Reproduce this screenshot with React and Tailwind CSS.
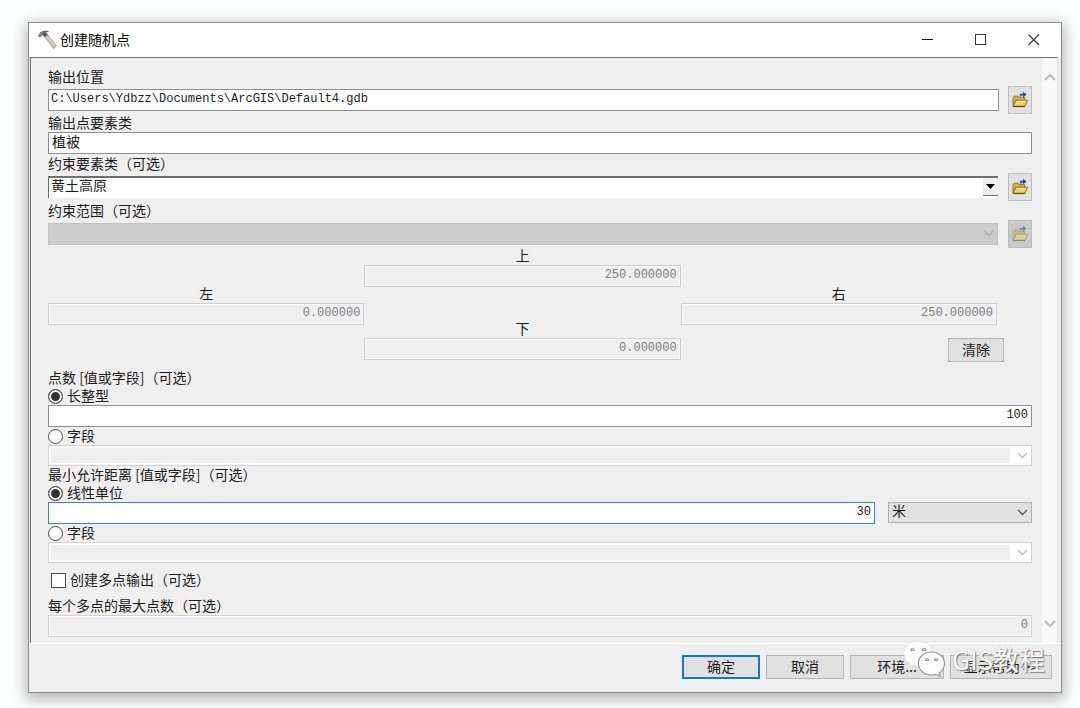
import { useState } from 'react';

const cjk = "font-['Noto_Sans_CJK_SC','Noto_Sans',sans-serif]";
const mono = "font-['Liberation_Mono','Noto_Sans_CJK_SC',monospace]";

function HammerIcon() {
    return (
        <svg width="20" height="20" viewBox="0 0 20 20" aria-hidden="true">
            <path d="M7.6 6.6 L10.4 4.2 L19 15.2 Q19.2 17.8 16.2 18.4 Z" fill="#c4b9a4" stroke="#a59a88" strokeWidth="0.6" />
            <path d="M9.8 6 L17.8 16" stroke="#e0d8c8" strokeWidth="1.2" />
            <path d="M0.8 6 L3.6 2 L7 0.8 L11.4 0.8 L11.6 2 L9 2.6 L10.8 4.6 L7.6 7.2 L5.8 5 L2.6 7.4 Z" fill="#65696b" />
            <path d="M1 6 L4 2.4 L6.6 2.2 L3 6.8 Z" fill="#8c9496" />
            <path d="M6 3.4 L9 5.4" stroke="#44484a" strokeWidth="1.2" />
        </svg>
    );
}

function FolderIcon() {
    return (
        <svg width="18" height="18" viewBox="0 0 18 18" aria-hidden="true">
            <path d="M2 15 V6.6 L3.2 5.2 H7 L8.2 6.6 H13.8 V9.5 H5 Z" fill="#d3b04c" stroke="#94792f" strokeWidth="1" />
            <path d="M2.2 15.4 L5 9.2 H16.4 L14 15.4 Z" fill="#efd36c" stroke="#8f742b" strokeWidth="1" />
            <path d="M5.6 10.4 H14.6" stroke="#f9e9a6" strokeWidth="1" />
            <path d="M2 15.5 H14" stroke="#57470f" strokeWidth="1.2" />
            <path d="M9.6 5.4 V3.6 H12.4" fill="none" stroke="#2a5f96" strokeWidth="1.6" />
            <path d="M12 0.8 L15.6 3.6 L12 6.4 Z" fill="#1a4f88" />
        </svg>
    );
}

function Chevron({ className }) {
    return (
        <svg width="11" height="7" viewBox="0 0 11 7" className={`pointer-events-none absolute ${className}`} aria-hidden="true">
            <path d="M1 1 L5.5 5.5 L10 1" fill="none" stroke="currentColor" strokeWidth="1.3" />
        </svg>
    );
}

function Label({ htmlFor, className = '', children }) {
    return (
        <label htmlFor={htmlFor} className={`block h-[17px] text-sm leading-[15px] whitespace-nowrap ${className}`}>
            {children}
        </label>
    );
}

function BrowseButton({ disabled }) {
    return (
        <button
            type="button"
            aria-label="浏览"
            disabled={disabled}
            className="flex h-7 w-6 shrink-0 items-center justify-center border border-[#bcbcbc] bg-[#e1e1e1] disabled:bg-[#cacaca]"
        >
            <span className={disabled ? 'opacity-50' : ''}>
                <FolderIcon />
            </span>
        </button>
    );
}

function TextInput({ className = '', ...props }) {
    return (
        <input
            type="text"
            className={`block h-[22px] min-w-0 border border-[#8f8f8f] bg-white outline-none ${className}`}
            {...props}
        />
    );
}

// Greyed out coordinate box of the extent block
function ExtentInput({ id, label, value }) {
    return (
        <div>
            <Label htmlFor={id} className="text-center">{label}</Label>
            <input
                id={id}
                type="text"
                disabled
                value={value}
                className={`block h-[22px] w-full border border-[#cfcfcf] bg-[#efefef] px-[3px] pb-0.5 text-right text-xs text-[#808080] shadow-[inset_0_0_0_1px_#fafafa] ${mono}`}
            />
        </div>
    );
}

function FieldSelect({ label }) {
    return (
        <div className="relative">
            <select
                aria-label={label}
                disabled
                className="block h-[21px] w-full appearance-none border border-[#d2d2d2] bg-[#efefef] opacity-100 shadow-[inset_-21px_0_0_0_#fff,inset_0_0_0_2px_#fff]"
            />
            <Chevron className="top-[7px] right-1 text-[#bdbdbd]" />
        </div>
    );
}

function Radio({ name, value, current, onChange, children }) {
    return (
        <label className="flex h-[18px] items-center gap-1 text-sm leading-4">
            <input
                type="radio"
                name={name}
                checked={current === value}
                onChange={() => onChange(value)}
                className="size-[15px] appearance-none rounded-full border border-[#4a4a4a] bg-white checked:bg-[#333] checked:shadow-[inset_0_0_0_2px_#fff]"
            />
            <span className="pb-0.5">{children}</span>
        </label>
    );
}

function DialogButton({ className = '', children }) {
    return (
        <button type="button" className={`h-6 bg-[#e1e1e1] pb-0.5 text-sm leading-4 whitespace-nowrap ${className}`}>
            {children}
        </button>
    );
}

function Watermark() {
    return (
        <div className="pointer-events-none absolute -top-1 right-4 flex items-center gap-1.5">
            <svg width="43" height="38" viewBox="0 0 43 38" aria-hidden="true">
                <path d="M15 1 C6 1 1 7 1 13.5 C1 17.5 3 21 6.5 23.5 L5 28 L10.5 25.3 C12 25.8 13.5 26 15 26 C23 26 29.5 20.5 29.5 13.5 C29.5 6.5 23 1 15 1 Z" fill="#fcfcfc" stroke="#dcdcdc" strokeWidth="0.8" />
                <path d="M28.5 12 C21 12 15.5 17 15.5 23.5 C15.5 30 21 35 28.5 35 C30 35 31.5 34.7 33 34.3 L37.5 36.5 L36.3 33 C39.5 30.800 41.5 27.5 41.5 23.5 C41.5 17 35.5 12 28.5 12 Z" fill="#fcfcfc" stroke="#9c9c9c" strokeWidth="1.2" />
                <g fill="#fcfcfc" stroke="#8a8a8a" strokeWidth="1">
                    <path d="M7.6 10.4 A1.9 1.9 0 0 1 11.4 10.4 Z" />
                    <path d="M19.2 10.4 A1.9 1.9 0 0 1 23 10.4 Z" />
                    <path d="M22.4 20.4 A1.7 1.7 0 0 1 25.800 20.4 Z" />
                    <path d="M31.4 20.4 A1.7 1.7 0 0 1 34.800 20.4 Z" />
                </g>
            </svg>
            <span className="text-[26px] leading-9 text-[#fafafa] [text-shadow:1px_1px_1px_#777,0_0_1px_#999]">GIS教程</span>
        </div>
    );
}

export default function App() {
    const [countMode, setCountMode] = useState('long');
    const [distanceMode, setDistanceMode] = useState('linear');
    const [location, setLocation] = useState('C:\\Users\\Ydbzz\\Documents\\ArcGIS\\Default4.gdb');
    const [featureClass, setFeatureClass] = useState('植被');
    const [count, setCount] = useState('100');
    const [distance, setDistance] = useState('30');

    return (
        <div className={`min-h-screen bg-[#fdfefe] pt-[22px] pr-[18px] pb-[15px] pl-7 text-[#1c1c1c] ${cjk}`}>
            <div className="border border-[#8c8c8c] bg-[#efefef] shadow-[0_4px_14px_2px_rgba(0,0,0,0.3)]">
                {/* Title bar */}
                <header className="flex h-[34px] items-center bg-white pr-[21px] pl-2">
                    <HammerIcon />
                    <h1 className="ml-[3px] flex-1 pb-0.5 text-sm text-black">创建随机点</h1>
                    <div className="flex items-center gap-[41px]">
                        <button type="button" aria-label="最小化">
                            <svg width="12" height="12" viewBox="0 0 12 12">
                                <path d="M0 5.5 H11" stroke="#111" />
                            </svg>
                        </button>
                        <button type="button" aria-label="最大化">
                            <svg width="12" height="12" viewBox="0 0 12 12">
                                <rect x="0.5" y="0.5" width="10" height="10" fill="none" stroke="#333" />
                            </svg>
                        </button>
                        <button type="button" aria-label="关闭">
                            <svg width="12" height="12" viewBox="0 0 12 12">
                                <path d="M0.5 0.5 L11 11 M11 0.5 L0.5 11" stroke="#333" strokeWidth="1.1" />
                            </svg>
                        </button>
                    </div>
                </header>

                {/* Parameters */}
                <div className="mr-[3px] ml-px flex border-t border-r border-l border-t-[#6f6f6f] border-r-[#e0e0e0] border-l-[#6f6f6f]">
                    <form className="min-w-0 flex-1 pt-[11px] pr-2.5 pb-1.5 pl-[17px]">
                        <Label htmlFor="location">输出位置</Label>
                        <div className="flex items-center gap-[9px]">
                            <TextInput id="location" value={location} onChange={(e) => setLocation(e.target.value)} className={`flex-1 px-0.5 pb-0.5 text-xs ${mono}`} />
                            <BrowseButton />
                        </div>

                        <Label htmlFor="featureClass" className="mt-px">输出点要素类</Label>
                        <TextInput id="featureClass" value={featureClass} onChange={(e) => setFeatureClass(e.target.value)} className="w-full px-[3px] pb-1 text-sm" />

                        <Label htmlFor="constraint" className="mt-0.5">约束要素类（可选）</Label>
                        <div className="flex items-center gap-2.5">
                            <div className="relative flex-1">
                                <select id="constraint" className="block h-[22px] w-full appearance-none border-t-2 border-l border-[#707070] bg-white pb-1.5 pl-0.5 text-sm leading-[14px] outline-none">
                                    <option>黄土高原</option>
                                </select>
                                <span className="pointer-events-none absolute top-0.5 right-0 flex h-[18px] w-[15px] items-center justify-center border-b border-[#707070] bg-[#efefef]">
                                    <svg width="9" height="5" viewBox="0 0 9 5" aria-hidden="true">
                                        <path d="M0 0 H9 L4.5 5 Z" fill="#000" />
                                    </svg>
                                </span>
                            </div>
                            <BrowseButton />
                        </div>

                        <Label htmlFor="extent" className="mt-0.5">约束范围（可选）</Label>
                        <div className="flex items-center gap-2.5">
                            <div className="relative flex-1">
                                <select id="extent" disabled className="block h-[22px] w-full appearance-none border border-[#c2c2c2] bg-[#cccccc] opacity-100" />
                                <Chevron className="top-[7px] right-1 text-[#adadad]" />
                            </div>
                            <BrowseButton disabled />
                        </div>

                        <div className="mr-[35px] grid grid-cols-3">
                            <div className="pt-[38px]">
                                <ExtentInput id="left" label="左" value="0.000000" />
                            </div>
                            <div className="flex flex-col gap-[34px]">
                                <ExtentInput id="top" label="上" value="250.000000" />
                                <ExtentInput id="bottom" label="下" value="0.000000" />
                            </div>
                            <div className="flex flex-col pt-[38px]">
                                <ExtentInput id="right" label="右" value="250.000000" />
                                <DialogButton className="mt-[13px] -mr-[7px] w-14 self-end border border-[#b5b5b5]">清除</DialogButton>
                            </div>
                        </div>

                        <Label htmlFor="count" className="mt-2">点数 [值或字段]（可选）</Label>
                        <Radio name="count" value="long" current={countMode} onChange={setCountMode}>长整型</Radio>
                        <TextInput id="count" value={count} onChange={(e) => setCount(e.target.value)} className={`w-full px-[3px] pb-0.5 text-right text-xs ${mono}`} />
                        <Radio name="count" value="field" current={countMode} onChange={setCountMode}>字段</Radio>
                        <FieldSelect label="点数字段" />

                        <Label htmlFor="distance" className="mt-px">最小允许距离 [值或字段]（可选）</Label>
                        <Radio name="distance" value="linear" current={distanceMode} onChange={setDistanceMode}>线性单位</Radio>
                        <div className="flex items-start gap-[13px]">
                            <input
                                id="distance"
                                type="text"
                                value={distance}
                                onChange={(e) => setDistance(e.target.value)}
                                className={`block h-[22px] min-w-0 flex-1 border border-[#2a8ad8] bg-white px-[3px] pb-0.5 text-right text-xs outline-none ${mono}`}
                            />
                            <div className="relative w-36">
                                <select aria-label="单位" className="block h-[21px] w-full appearance-none border border-[#b0b0b0] bg-[#e1e1e1] pb-1 pl-[3px] text-sm leading-[15px] outline-none">
                                    <option>米</option>
                                </select>
                                <Chevron className="top-[7px] right-1 text-[#555]" />
                            </div>
                        </div>
                        <Radio name="distance" value="field" current={distanceMode} onChange={setDistanceMode}>字段</Radio>
                        <FieldSelect label="距离字段" />

                        <label className="mt-2 ml-[3px] flex h-[18px] items-center gap-1 text-sm leading-4">
                            <input type="checkbox" className="size-[15px] appearance-none border border-[#4a4a4a] bg-white checked:bg-[#333]" />
                            <span className="pb-0.5">创建多点输出（可选）</span>
                        </label>

                        <Label htmlFor="maxPoints" className="mt-[9px]">每个多点的最大点数（可选）</Label>
                        <input
                            id="maxPoints"
                            type="text"
                            disabled
                            value="0"
                            className={`block h-[22px] w-full border border-[#d2d2d2] bg-[#efefef] px-[3px] pb-0.5 text-right text-xs text-[#808080] shadow-[inset_0_0_0_1px_#fafafa] ${mono}`}
                        />
                    </form>

                    {/* Scroll bar */}
                    <div className="flex w-[15px] flex-col items-center justify-between bg-[#f9f9f9] pt-[15px] pb-[15px] text-[#bcbcbc]">
                        <svg width="12" height="8" viewBox="0 0 12 8" aria-hidden="true">
                            <path d="M1 7 L6 2 L11 7" fill="none" stroke="currentColor" strokeWidth="2.2" />
                        </svg>
                        <svg width="12" height="8" viewBox="0 0 12 8" aria-hidden="true">
                            <path d="M1 1 L6 6 L11 1" fill="none" stroke="currentColor" strokeWidth="2.2" />
                        </svg>
                    </div>
                </div>

                {/* Dialog buttons */}
                <footer className="relative flex justify-end gap-1.5 border-t border-white pt-[11px] pr-[9px] pb-[13px]">
                    <DialogButton className="w-[78px] border-2 border-[#0b7bd8]">确定</DialogButton>
                    <DialogButton className="w-[78px] border border-[#b5b5b5]">取消</DialogButton>
                    <DialogButton className="w-[94px] border border-[#b5b5b5]">环境...</DialogButton>
                    <DialogButton className="w-[102px] border border-[#b5b5b5]">显示帮助 &gt;&gt;</DialogButton>
                    <Watermark />
                </footer>
            </div>
        </div>
    );
}
